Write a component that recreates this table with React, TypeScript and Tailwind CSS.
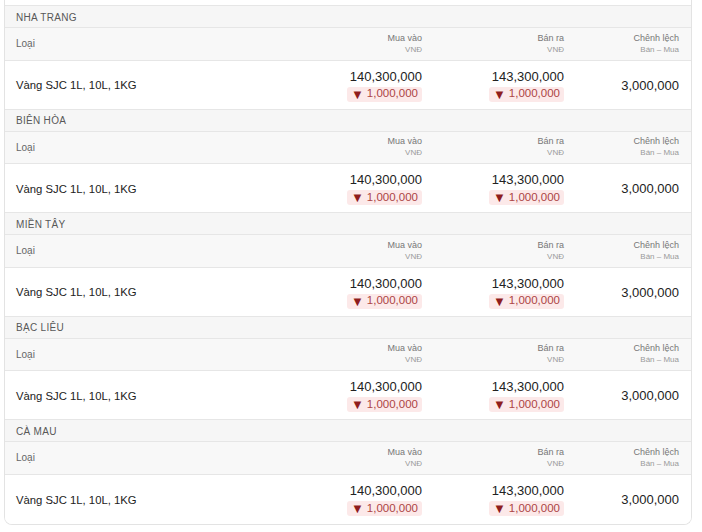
import React from "react";

type Section = { region: string };

const sections: Section[] = [
  { region: "Nha Trang" },
  { region: "Biên Hòa" },
  { region: "Miền Tây" },
  { region: "Bạc Liêu" },
  { region: "Cà Mau" },
];

const grid = "grid grid-cols-[1fr_152px_142px_115px]";

function Delta({ value }: { value: string }) {
  return (
    <span className="mt-[3px] inline-flex items-center gap-[3px] rounded-[3px] bg-[#fce9e9] px-[4px] h-[15px] text-[11.5px] leading-none text-[#ad4545]">
      <span className="text-[13px] text-[#8f1d1d]">▼</span>
      {value}
    </span>
  );
}

function RegionBlock({ region }: Section) {
  return (
    <div>
      <div className="flex h-[22px] items-center border-b border-[#e6e6e6] bg-[#f6f6f6] pl-[11px] pt-px text-[10px] uppercase tracking-[0.03em] text-[#585858]">
        {region}
      </div>
      <div className={`${grid} h-[32.5px] border-b border-[#e6e6e6] bg-[#f8f8f8] text-[#777]`}>
        <div className="flex items-center pl-[11px] text-[10px] text-[#666]">Loại</div>
        <div className="flex flex-col items-end justify-center px-3 leading-[11px]">
          <span className="text-[9px]">Mua vào</span>
          <span className="text-[8px] text-[#9a9a9a]">VNĐ</span>
        </div>
        <div className="flex flex-col items-end justify-center px-3 leading-[11px]">
          <span className="text-[9px]">Bán ra</span>
          <span className="text-[8px] text-[#9a9a9a]">VNĐ</span>
        </div>
        <div className="flex flex-col items-end justify-center px-3 leading-[11px]">
          <span className="text-[9px]">Chênh lệch</span>
          <span className="text-[8px] text-[#9a9a9a]">Bán – Mua</span>
        </div>
      </div>
      <div className={`${grid} h-[49px] border-b border-[#e6e6e6] bg-white text-[#222]`}>
        <div className="flex items-center pl-[11px] pt-[2px] text-[11.3px]">Vàng SJC 1L, 10L, 1KG</div>
        <div className="flex flex-col items-end justify-center px-3 pt-px">
          <span className="text-[13px] leading-[15px]">140,300,000</span>
          <Delta value="1,000,000" />
        </div>
        <div className="flex flex-col items-end justify-center px-3 pt-px">
          <span className="text-[13px] leading-[15px]">143,300,000</span>
          <Delta value="1,000,000" />
        </div>
        <div className="flex items-center justify-end px-3 pt-[2px] text-[13px]">3,000,000</div>
      </div>
    </div>
  );
}

export default function App() {
  return (
    <div className="h-[532px] w-[702px] overflow-hidden bg-white font-['Liberation_Sans',Arial,sans-serif]">
      <div className="ml-[4px] w-[688px] overflow-hidden rounded-b-[8px] border-x border-b border-[#e3e3e3] [&>div:last-child>div:last-child]:border-b-0">
        <div className="h-[6px] border-b border-[#e6e6e6] bg-white" />
        {sections.map((s) => (
          <RegionBlock key={s.region} region={s.region} />
        ))}
      </div>
    </div>
  );
}
